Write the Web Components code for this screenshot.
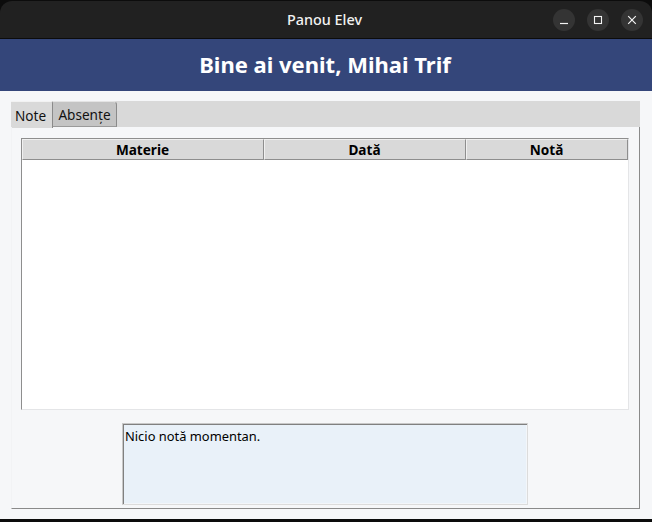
<!DOCTYPE html>
<html lang="ro">
<head>
<meta charset="utf-8">
<title>Panou Elev</title>
<style>
  html, body { margin: 0; height: 100%; background: #0c0c0c; }
  body { font-family: "Noto Sans", sans-serif; overflow: hidden; }
</style>
</head>
<body>
<elev-window title="Panou Elev">
  <welcome-banner>Bine ai venit, Mihai Trif</welcome-banner>
  <elev-tabs>
    <grades-table></grades-table>
    <note-box>Nicio notă momentan.</note-box>
  </elev-tabs>
</elev-window>

<script>
const tplWindow = document.createElement('template');
tplWindow.innerHTML = `
  <style>
    :host { display: flex; flex-direction: column; width: 652px; height: 519px; padding-top: 1px; box-sizing: border-box; background: #0c0c0c; }
    .titlebar {
      height: 38px; flex: none;
      display: grid; grid-template-columns: 1fr auto 1fr; align-items: center;
      background: #212121; color: #f2f2f2;
      border-radius: 12px 12px 0 0;
      border-bottom: 1px solid #0c0c0c;
      box-sizing: border-box;
      font: 500 14.4px "Noto Sans", sans-serif;
    }
    .name { grid-column: 2; padding-right: 3px; }
    .buttons { grid-column: 3; justify-self: end; display: flex; gap: 12px; padding-right: 9px; }
    .btn { width: 22px; height: 22px; border-radius: 50%; background: #343434; display: flex; align-items: center; justify-content: center; }
    svg { display: block; }
    .content { flex: 1; display: flex; flex-direction: column; background: #f6f7f9; min-height: 0; }
  </style>
  <div class="titlebar">
    <span class="name"></span>
    <div class="buttons">
      <div class="btn"><svg width="10" height="10" viewBox="0 0 10 10"><path d="M1 8.5h8" stroke="#f4f4f4" stroke-width="1.2"/></svg></div>
      <div class="btn"><svg width="10" height="10" viewBox="0 0 10 10"><rect x="1.5" y="1.5" width="7" height="7" fill="none" stroke="#f4f4f4" stroke-width="1.1"/></svg></div>
      <div class="btn"><svg width="10" height="10" viewBox="0 0 10 10"><path d="M1.2 1.2l7.6 7.6M8.8 1.2l-7.6 7.6" stroke="#f4f4f4" stroke-width="1.2"/></svg></div>
    </div>
  </div>
  <div class="content"><slot></slot></div>
`;

class ElevWindow extends HTMLElement {
  constructor() {
    super();
    this.attachShadow({ mode: 'open' }).appendChild(tplWindow.content.cloneNode(true));
    this.shadowRoot.querySelector('.name').textContent = this.getAttribute('title');
  }
}

const tplBanner = document.createElement('template');
tplBanner.innerHTML = `
  <style>
    :host {
      display: flex; align-items: center; justify-content: center;
      height: 52px; flex: none; box-sizing: border-box;
      padding: 0 2px 2px 0;
      background: #34467a; color: #fff;
      font: 700 22px "Noto Sans", sans-serif;
    }
  </style>
  <slot></slot>
`;

class WelcomeBanner extends HTMLElement {
  constructor() {
    super();
    this.attachShadow({ mode: 'open' }).appendChild(tplBanner.content.cloneNode(true));
  }
}

const tplTabs = document.createElement('template');
tplTabs.innerHTML = `
  <style>
    :host { display: flex; flex-direction: column; flex: 1; min-height: 0; margin: 10px 12px 10px 11px; font: 13.6px "Noto Sans", sans-serif; color: #111; }
    .bar { display: flex; height: 26px; flex: none; background: #d9d9d9; }
    .tab { display: flex; align-items: center; justify-content: center; box-sizing: border-box; height: 26px; border-right: 1px solid #8a8a8a; border-top: 1px solid #e4e4e4; }
    .tab.active { width: 42px; height: 27px; padding-right: 2px; background: #d9d9d9; border-top-color: #f2f2f2; border-radius: 0 2px 0 0; }
    .tab.idle { width: 64px; background: #c4c4c4; border-bottom: 1px solid #9a9a9a; border-radius: 0 4px 0 0; }
    .pane {
      flex: 1; min-height: 0; display: flex; flex-direction: column;
      box-sizing: border-box; padding: 11px 10px 4px 9px;
      border-right: 1px solid #8a8a8a; border-bottom: 1px solid #8a8a8a; border-left: 1px solid #f2f3f5;
    }
  </style>
  <div class="bar">
    <div class="tab active">Note</div>
    <div class="tab idle">Absențe</div>
  </div>
  <div class="pane"><slot></slot></div>
`;

class ElevTabs extends HTMLElement {
  constructor() {
    super();
    this.attachShadow({ mode: 'open' }).appendChild(tplTabs.content.cloneNode(true));
  }
}

const tplTable = document.createElement('template');
tplTable.innerHTML = `
  <style>
    :host {
      display: block; height: 272px; flex: none; box-sizing: border-box;
      background: #fff;
      border: 1px solid #e4e5e7; border-top-color: #8e8e8e; border-left-color: #8e8e8e;
    }
    .head { display: grid; grid-template-columns: 242px 202px 162px; height: 21px; }
    .cell {
      display: flex; align-items: center; justify-content: center; box-sizing: border-box;
      padding-right: 1px;
      background: #d9d9d9; color: #000; font: 700 13.6px "Noto Sans", sans-serif;
      border-right: 1px solid #8e8e8e; border-bottom: 1px solid #8e8e8e; border-left: 1px solid #f0f0f0; border-top: 1px solid #f0f0f0;
    }
  </style>
  <div class="head">
    <div class="cell">Materie</div>
    <div class="cell">Dată</div>
    <div class="cell">Notă</div>
  </div>
`;

class GradesTable extends HTMLElement {
  constructor() {
    super();
    this.attachShadow({ mode: 'open' }).appendChild(tplTable.content.cloneNode(true));
  }
}

const tplNote = document.createElement('template');
tplNote.innerHTML = `
  <style>
    :host {
      display: block; width: 406px; height: 82px; box-sizing: border-box; margin: 13px 0 0 101px; flex: none;
      padding: 4px 2px;
      background: #e9f1f9; color: #000;
      font: 12.9px/17px "Noto Sans", sans-serif;
      border: 1px solid; border-color: #c8c8c8 #dcdcdc #dcdcdc #c8c8c8;
      box-shadow: inset 1px 1px 0 #808080, inset -1px -1px 0 #f3f6fa;
    }
  </style>
  <slot></slot>
`;

class NoteBox extends HTMLElement {
  constructor() {
    super();
    this.attachShadow({ mode: 'open' }).appendChild(tplNote.content.cloneNode(true));
  }
}

customElements.define('elev-window', ElevWindow);
customElements.define('welcome-banner', WelcomeBanner);
customElements.define('elev-tabs', ElevTabs);
customElements.define('grades-table', GradesTable);
customElements.define('note-box', NoteBox);
</script>
</body>
</html>
